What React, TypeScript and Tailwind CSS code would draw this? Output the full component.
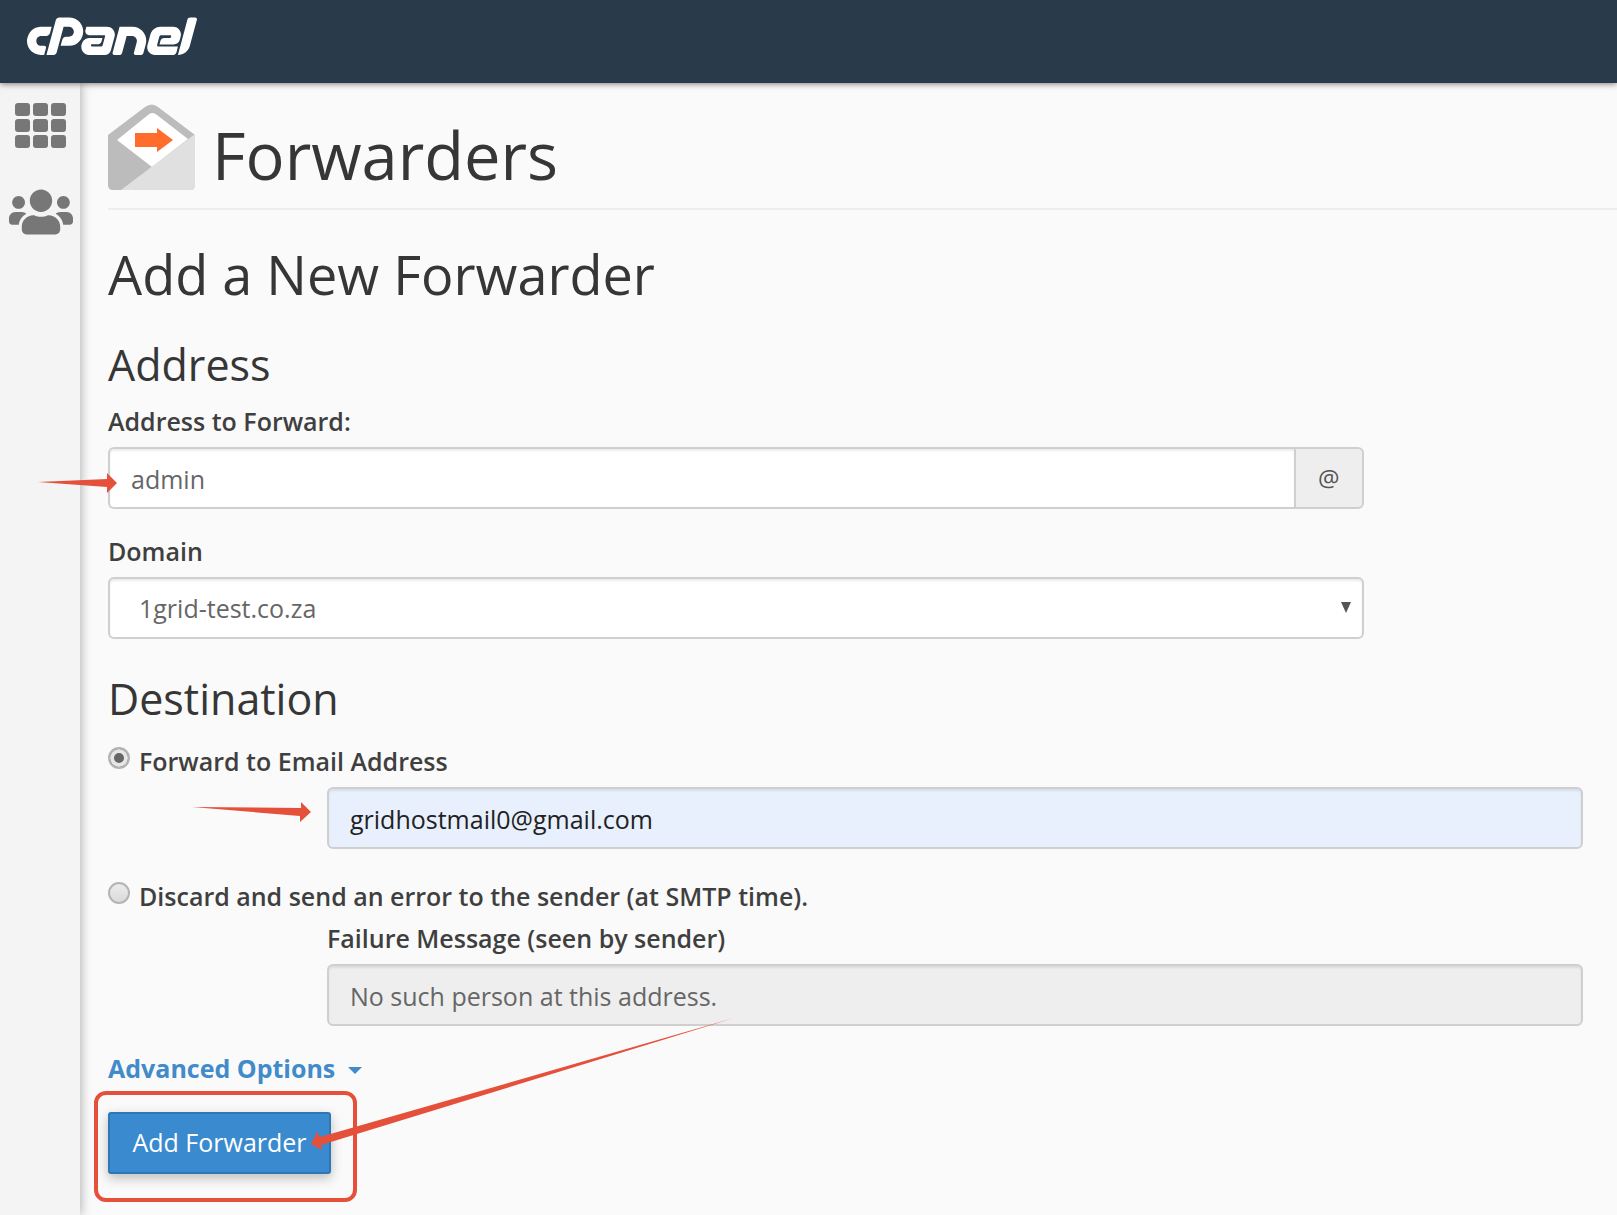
import { useState } from "react";
import { FaCpanel, FaUsers } from "react-icons/fa";

const field =
  "h-[62px] w-full rounded-md border-2 border-[#cfcfcf] px-[21px] pt-0.5 text-[25px] shadow-[inset_0_2px_2px_rgba(0,0,0,0.08)] outline-none";
const label = "block text-[25px] font-semibold leading-9 text-[#3f3f3f]";
const radio =
  "mt-1 size-[22px] shrink-0 appearance-none rounded-full border-2 border-[#b4b4b4] bg-linear-to-b from-[#ececec] to-[#dadada] checked:bg-none checked:bg-[#666] checked:shadow-[inset_0_0_0_4px_#e6e6e6]";

function GridIcon() {
  return (
    <svg viewBox="0 0 52 45" className="h-[45px] w-[52px]" fill="#777" aria-hidden="true">
      {[0, 16, 32].map((y) =>
        [0, 18, 36].map((x) => <rect key={`${x}-${y}`} x={x + 1} y={y} width="15" height="13" rx="3" />),
      )}
    </svg>
  );
}

function EnvelopeIcon() {
  return (
    <svg viewBox="0 0 87 86" className="h-[86px] w-[87px] shrink-0" aria-hidden="true">
      <path d="M0 31 37 3Q44 -2 50 3L87 31V81Q87 86 82 86H5Q0 86 0 81Z" fill="#bcbcbc" />
      <path d="M9 36 40 11Q44 7 49 11L80 35 44 63Z" fill="#fff" />
      <path d="M87 30V81Q87 86 82 86H13Z" fill="#e0e0e0" />
      <path d="M27 29H49V24L65 36 49 48V43H27Z" fill="#ff6c2c" />
    </svg>
  );
}

export default function App() {
  const [target, setTarget] = useState("email");
  return (
    <div className="flex min-h-screen flex-col overflow-hidden bg-[#fafafa] font-['Open_Sans',sans-serif] text-[#363636]">
      <header className="relative z-10 flex h-[83px] items-center bg-[#293a4a] pb-2 pl-[27px] shadow-[0_1px_6px_rgba(0,0,0,0.5)]">
        <a href="#home" aria-label="cPanel" className="text-white">
          <FaCpanel className="h-[136px] w-[170px]" />
        </a>
      </header>

      <div className="flex flex-1">
        <nav className="flex w-20 shrink-0 flex-col items-center bg-[#f4f4f4] pt-5 shadow-[1px_0_10px_rgba(0,0,0,0.3)]">
          <a href="#tools" aria-label="Tools">
            <GridIcon />
          </a>
          <a href="#users" aria-label="User Manager" className="mt-[38px] pl-px text-[#777]">
            <FaUsers className="h-[52px] w-16" />
          </a>
        </nav>

        <main className="min-w-0 flex-1 pb-10 pl-7 pt-[21px]">
          <div className="flex items-end gap-[17px] border-b-2 border-[#ededed] pb-[18px]">
            <EnvelopeIcon />
            <h1 className="text-[65px] leading-[70px]">Forwarders</h1>
          </div>

          <h2 className="mt-[34px] text-[54px] leading-[60px]">Add a New Forwarder</h2>

          <form className="pr-0.5" onSubmit={(e) => e.preventDefault()}>
            <h3 className="mt-[37px] text-[43px] leading-[48px]">Address</h3>
            <div className="mt-[14px] w-10/12">
              <label htmlFor="address" className={label}>
                Address to Forward:
              </label>
              <div className="relative mt-2 flex">
                <input
                  id="address"
                  defaultValue="admin"
                  className={`${field} min-w-0 flex-1 rounded-r-none border-r-0 bg-white text-[#666]`}
                />
                <span className="flex w-[70px] items-center justify-center rounded-r-md border-2 border-[#cfcfcf] bg-[#eee] text-[24px] text-[#555]">
                  @
                </span>
                <svg
                  viewBox="0 0 80 22"
                  className="pointer-events-none absolute -left-[70px] top-[25px] h-[22px] w-20"
                  fill="#e5503b"
                  aria-hidden="true"
                >
                  <path d="M0 10 69 7V1L79 11 69 21V15Z" />
                </svg>
              </div>

              <label htmlFor="domain" className={`${label} mt-6`}>
                Domain
              </label>
              <div className="relative mt-2">
                <select id="domain" className={`${field} appearance-none bg-white pl-[29px] text-[#666]`}>
                  <option>1grid-test.co.za</option>
                </select>
                <svg
                  viewBox="0 0 12 12"
                  className="pointer-events-none absolute right-3 top-6 size-3"
                  fill="#555"
                  aria-hidden="true"
                >
                  <path d="M1 1H11L6 12Z" />
                </svg>
              </div>
            </div>

            <h3 className="mt-9 text-[43px] leading-[48px]">Destination</h3>
            <div className="mt-5 flex gap-[9px]">
              <input
                id="to-email"
                type="radio"
                name="target"
                className={radio}
                checked={target === "email"}
                onChange={() => setTarget("email")}
              />
              <label htmlFor="to-email" className={label}>
                Forward to Email Address
              </label>
            </div>
            <div className="relative ml-[219px] mr-8 mt-2">
              <input
                aria-label="Destination email address"
                type="email"
                defaultValue="gridhostmail0@gmail.com"
                className={`${field} bg-[#e8f0fe] text-[#222]`}
              />
              <svg
                viewBox="0 0 120 22"
                className="pointer-events-none absolute -left-[135px] top-[14px] h-[22px] w-[120px]"
                fill="#e5503b"
                aria-hidden="true"
              >
                <path d="M0 6 109 7V1L119 11 108 21V15Z" />
              </svg>
            </div>

            <div className="mt-[29px] flex gap-[9px]">
              <input
                id="discard"
                type="radio"
                name="target"
                className={radio}
                checked={target === "discard"}
                onChange={() => setTarget("discard")}
              />
              <label htmlFor="discard" className={label}>
                Discard and send an error to the sender (at SMTP time).
              </label>
            </div>
            <div className="ml-[219px] mr-8 mt-[6px]">
              <label htmlFor="failure" className={label}>
                Failure Message (seen by sender)
              </label>
              <input
                id="failure"
                disabled={target !== "discard"}
                defaultValue="No such person at this address."
                className={`${field} mt-2 bg-[#eee] text-[#666]`}
              />
            </div>

            <a
              href="#advanced"
              className="mt-6 inline-flex items-center gap-[13px] text-[25px] font-bold leading-9 text-[#428bca]"
            >
              Advanced Options
              <svg viewBox="0 0 14 7" className="mt-1 h-[7px] w-[14px]" fill="currentColor" aria-hidden="true">
                <path d="M0 0H14L7 7Z" />
              </svg>
            </a>

            <div className="relative mt-[26px] w-fit">
              <button
                type="submit"
                className="h-[62px] w-[223px] rounded-[3px] border-2 border-[#2f76b5] bg-[#3a8acf] text-[25px] text-white shadow-[0_4px_12px_rgba(0,0,0,0.25)]"
              >
                Add Forwarder
              </button>
              <div className="pointer-events-none absolute -left-[14px] -top-[21px] h-[111px] w-[263px] rounded-xl border-4 border-[#e5503b]" />
              <svg
                viewBox="0 0 430 136"
                className="pointer-events-none absolute -top-24 left-[202px] h-[136px] w-[430px]"
                fill="#e5503b"
                aria-hidden="true"
              >
                <path d="M424 2 10 121 7 116 1 128 12 134 11 129Z" />
              </svg>
            </div>
          </form>
        </main>
      </div>
    </div>
  );
}
